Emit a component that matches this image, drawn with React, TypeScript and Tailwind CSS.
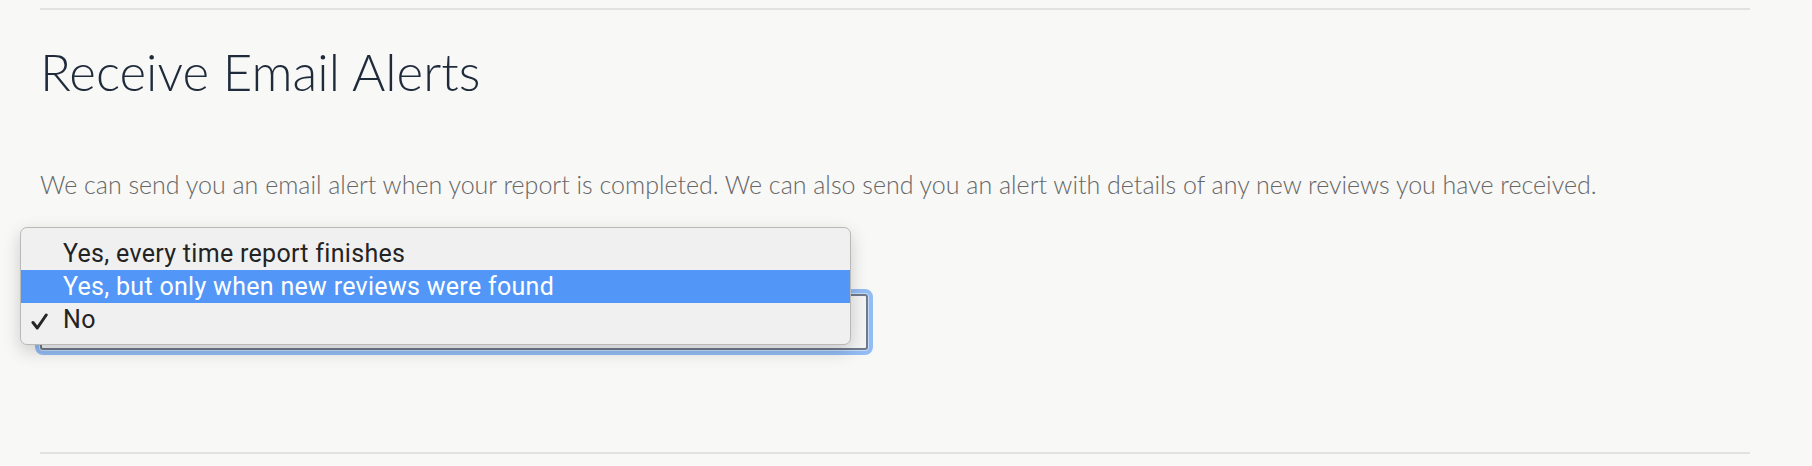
import React from "react";

const options = [
  { label: "Yes, every time report finishes", active: false, checked: false },
  { label: "Yes, but only when new reviews were found", active: true, checked: false },
  { label: "No", active: false, checked: true },
];

const CheckMark = () => (
  <svg width="17" height="17" viewBox="0 0 17 17" className="text-[#262626]">
    <path d="M2 9.5 L6.3 15 L15.2 2" fill="none" stroke="currentColor" strokeWidth="3" strokeLinecap="round" strokeLinejoin="round" />
  </svg>
);

const EmailAlerts = () => {
  return (
    <div className="min-h-screen w-full bg-[#f8f8f6]">
      <div className="w-[1710px] ml-[40px] pt-[8px] font-['Lato',sans-serif]">
        <div className="h-[2px] bg-[#e2e2df]" />

        <h2 className="mt-[32px] text-[51px] leading-[60px] font-light text-[#1f2b3b]">
          Receive Email Alerts
        </h2>

        <p className="mt-[67px] text-[25px] leading-[30px] font-light text-[#666]">
          We can send you an email alert when your report is completed. We can also send you an alert with details of any new reviews you have received.
        </p>

        {/* select with open native menu */}
        <div className="relative mt-[90px] -ml-[5px] w-[838px] h-[66px] rounded-[8px] border-[4px] border-[#93bcf4] bg-[#c6dbf8] p-[1px]">
          <div className="h-full w-full rounded-[3px] border-2 border-[#6e7b8e] bg-[#f4f4f4]" />

          <div className="absolute left-[-19px] top-[-66px] w-[831px] h-[118px] rounded-[7px] border border-[#b9b9b9] bg-[#f0f0f0] shadow-[0_6px_18px_rgba(0,0,0,0.18)] pt-[9px] font-['Roboto',sans-serif]">
            {options.map((opt) => (
              <div
                key={opt.label}
                className={`flex items-center h-[33px] text-[25px] tracking-[0.3px] ${opt.active ? "bg-[#5297f7] text-white" : "text-[#232323]"}`}
              >
                <span className="w-[42px] pl-[10px] pt-[3px] flex items-center">{opt.checked && <CheckMark />}</span>
                <span>{opt.label}</span>
              </div>
            ))}
          </div>
        </div>

        <div className="mt-[97px] h-[2px] bg-[#e2e2df]" />
      </div>
    </div>
  );
};

export default EmailAlerts;
